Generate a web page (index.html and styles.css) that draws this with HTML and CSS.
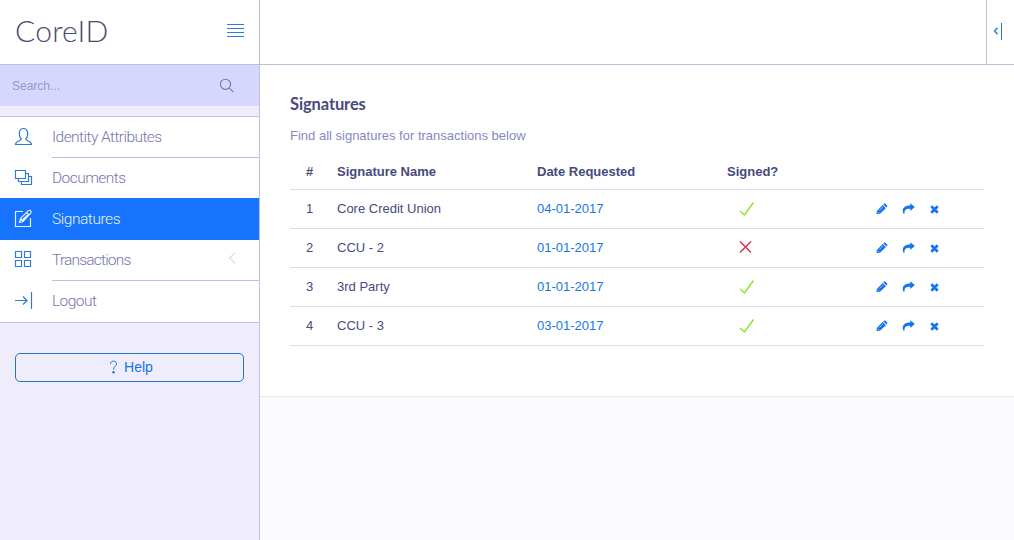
FILE: index.html
```html
<!DOCTYPE html>
<html lang="en">
<head>
<meta charset="utf-8">
<title>CoreID</title>
<link rel="stylesheet" href="styles.css">
</head>
<body>
<svg class="sprite" width="0" height="0">
  <symbol id="check" viewBox="0 0 16 16"><path d="M1 10l4.500 4L14.500 1.500" fill="none" stroke="#8fe22e" stroke-width="1.500"/></symbol>
  <symbol id="cross" viewBox="0 0 16 16"><path d="M1 1.500l11 11M12 1.500l-11 11" fill="none" stroke="#d92a48" stroke-width="1.400"/></symbol>
  <symbol id="pencil" viewBox="0 0 12 12"><path d="M.5 11l.3-3.100L6.700 2l3.200 3.200-5.900 5.600zM7.300 1.400l.9-.8q.5-.4 1 0l2 1.900q.5.500 0 1l-.8 1z" fill="#1673f0"/><path d="M1.500 8.800l1.400 1.400M3.300 7.600l3.500-3.500" stroke="#fff" stroke-width=".5"/></symbol>
  <symbol id="share" viewBox="0 0 13 12"><path d="M8.300.3L12.800 4.100 8.300 8V5.900C4.500 5.700 2.300 6.500 2.500 10.800H1.500C-.8 5.500 2.500 2.300 8.300 2.400z" fill="#1673f0"/></symbol>
  <symbol id="remove" viewBox="0 0 9 9"><path d="M1.300 1.300l6.400 6.400M7.700 1.300L1.300 7.700" stroke="#1673f0" stroke-width="2.700"/></symbol>
</svg>
<div class="app">
  <aside class="sidebar">
    <header class="brand">
      <span class="logo">CoreID</span>
      <svg class="burger" width="18" height="15" viewBox="0 0 18 15"><path d="M0 1.500h17M0 5.500h17M0 9.500h17M0 13.500h17" stroke="#2f78dc"/></svg>
    </header>
    <div class="search">
      <span class="placeholder">Search...</span>
      <svg width="16" height="16" viewBox="0 0 16 16" fill="none" stroke="#7375b2" stroke-width="1.100"><circle cx="6.500" cy="6.300" r="5.100"/><path d="M10.300 10.200l4 4"/></svg>
    </div>
    <nav class="menu">
      <a class="item"><svg class="icon" viewBox="0 0 20 20"><path d="M1.500 18.500c0-4 5.800-3 5.800-5.700C4 9.500 4.800 2.500 9.500 2.500s5.500 7 2.200 10.300c0 2.700 5.800 1.700 5.800 5.700z"/></svg><span class="label line">Identity Attributes</span></a>
      <a class="item short"><svg class="icon" viewBox="0 0 20 20"><path d="M1.500 3.500h10v8h-10zM12 6.500h2.500v8h-10V12M15 9.500h2.500v8h-10V15"/></svg><span class="label">Documents</span></a>
      <a class="item active"><svg class="icon" viewBox="0 0 20 20"><path d="M9 3.500H1.500v15h15V10M5.500 14.500l1-4 7.800-7.800q1.500-.9 2.400 0t0 2.400L9 13.500zM6.500 10.500l2.500 3M12.500 4.500l2.500 2.500M8.500 12l5.200-5.200"/></svg><span class="label">Signatures</span></a>
      <a class="item"><svg class="icon" viewBox="0 0 20 20"><path d="M1.500 2.500h6v6h-6zM10.500 2.500h6v6h-6zM1.500 11.500h6v6h-6zM10.500 11.500h6v6h-6z"/></svg><span class="label tight line">Transactions</span><svg class="chevron" width="8" height="12" viewBox="0 0 8 12"><path d="M7 .8L1.500 6 7 11.200" fill="none" stroke="#c6c6da"/></svg></a>
      <a class="item"><svg class="icon" viewBox="0 0 20 20"><path d="M1 10.500h12M9 6.500l4 4-4 4M17.500 2v17"/></svg><span class="label">Logout</span></a>
    </nav>
    <button class="help"><svg width="9" height="14" viewBox="0 0 9 14"><path d="M1.500 4.200C1.500.1 7.500.2 7.500 3.700 7.500 6.200 4.500 6.500 4.500 9.500" fill="none" stroke="#1673e6"/><circle cx="4.500" cy="12.300" r="1.200" fill="#1673e6"/></svg><span>Help</span></button>
  </aside>
  <main class="main">
    <header class="topbar"><div class="toggle"><svg width="10" height="18" viewBox="0 0 10 18" fill="none" stroke="#1b78cd"><path d="M4.500 5.800L1.500 9l3 3.200" stroke-width="1.300"/><path d="M8.500 1v17"/></svg></div></header>
    <section class="panel">
      <h1 class="title">Signatures</h1>
      <p class="intro">Find all signatures for transactions below</p>
      <div class="table">
        <div class="row head"><span class="num">#</span><span>Signature Name</span><span>Date Requested</span><span>Signed?</span></div>
        <div class="row"><span class="num">1</span><span>Core Credit Union</span><a class="date">04-01-2017</a><svg class="status"><use href="#check"/></svg><span class="actions"><svg class="pencil"><use href="#pencil"/></svg><svg class="share"><use href="#share"/></svg><svg class="remove"><use href="#remove"/></svg></span></div>
        <div class="row"><span class="num">2</span><span>CCU - 2</span><a class="date">01-01-2017</a><svg class="status"><use href="#cross"/></svg><span class="actions"><svg class="pencil"><use href="#pencil"/></svg><svg class="share"><use href="#share"/></svg><svg class="remove"><use href="#remove"/></svg></span></div>
        <div class="row"><span class="num">3</span><span>3rd Party</span><a class="date">01-01-2017</a><svg class="status"><use href="#check"/></svg><span class="actions"><svg class="pencil"><use href="#pencil"/></svg><svg class="share"><use href="#share"/></svg><svg class="remove"><use href="#remove"/></svg></span></div>
        <div class="row"><span class="num">4</span><span>CCU - 3</span><a class="date">03-01-2017</a><svg class="status"><use href="#check"/></svg><span class="actions"><svg class="pencil"><use href="#pencil"/></svg><svg class="share"><use href="#share"/></svg><svg class="remove"><use href="#remove"/></svg></span></div>
      </div>
    </section>
  </main>
</div>
</body>
</html>
```
FILE: styles.css
```css
* { box-sizing: border-box; }
body { margin: 0; font-family: "Liberation Sans", Arial, sans-serif; font-size: 13px; color: #484a7c; }
svg { display: block; flex: none; }
.sprite { position: absolute; }
.app { display: flex; height: 540px; overflow: hidden; }

.sidebar { width: 260px; flex: none; background: #efedfc; border-right: 1px solid #c1bfe2; }
.brand { height: 65px; background: #fff; border-bottom: 1px solid #bebde6; display: flex; justify-content: space-between; padding: 0 14px 0 15px; }
.logo { font-family: Lato, sans-serif; font-weight: 300; font-size: 30px; line-height: 60px; letter-spacing: .2px; color: #484a70; }
.burger { margin-top: 23px; }
.search { height: 41px; background: #d5d8fc; display: flex; align-items: center; justify-content: space-between; padding: 0 24px 0 12px; }
.placeholder { font-size: 12px; color: #9698d2; }
.menu { margin-top: 10px; background: #fff; border-top: 1px solid #c1bfe2; border-bottom: 1px solid #c1bfe2; }
.item { display: flex; align-items: flex-start; height: 41px; padding-left: 14px; position: relative; color: #7476ac; }
.short { height: 40px; }
.icon { width: 20px; height: 20px; margin: 9px 18px 0 0; fill: none; stroke: #2f7ad8; stroke-width: 1.2; }
.label { flex: 1; height: 41px; line-height: 40px; font-family: Roboto, "Liberation Sans", sans-serif; font-weight: 300; font-size: 15.5px; letter-spacing: -.55px; white-space: nowrap; }
.tight { letter-spacing: -.8px; }
.line { border-bottom: 1px solid #bfbde2; }
.active { height: 42px; padding-top: 1px; background: #1673fc; color: #e8efff; }
.active .icon { stroke: #e8f1ff; margin-top: 9px; }
.active .label { letter-spacing: -.45px; }
.chevron { position: absolute; right: 23px; top: 12px; }
.help { margin: 30px 15px 0; width: 229px; height: 29px; border: 1px solid #2474cc; border-radius: 5px; background: transparent; display: flex; align-items: center; justify-content: center; gap: 6px; padding: 0 0 1px 3px; font: 14px "Liberation Sans", Arial, sans-serif; color: #1673e6; }

.main { flex: 1; background: #fbfbfe; }
.topbar { height: 65px; background: #fff; border-bottom: 1px solid #bfbed9; display: flex; justify-content: flex-end; }
.toggle { width: 28px; border-left: 1px solid #bfbed9; padding: 22px 0 0 6px; }
.panel { height: 332px; background: #fff; border-bottom: 1px solid #e9e9f3; padding: 29px 30px 0; }
.title { margin: 0; font: bold 16.5px/20px Lato, sans-serif; letter-spacing: -.12px; }
.intro { margin: 12px 0 8px; line-height: 20px; color: #8688c2; }
.table { width: 694px; }
.row { display: grid; grid-template-columns: 47px 200px 190px 149px 1fr; align-items: center; height: 39px; padding-bottom: 1px; border-bottom: 1px solid #dcdcee; }
.head { height: 36px; padding-bottom: 0; font-weight: bold; }
.num { padding-left: 16px; }
.date { color: #1878e6; }
.status { width: 16px; height: 16px; margin: 1px 0 0 12px; }
.actions { display: flex; align-items: center; padding-top: 1px; }
.pencil { width: 12px; height: 12px; }
.share { width: 13px; height: 12px; margin-left: 14px; }
.remove { width: 9px; height: 9px; margin-left: 15px; }
```
